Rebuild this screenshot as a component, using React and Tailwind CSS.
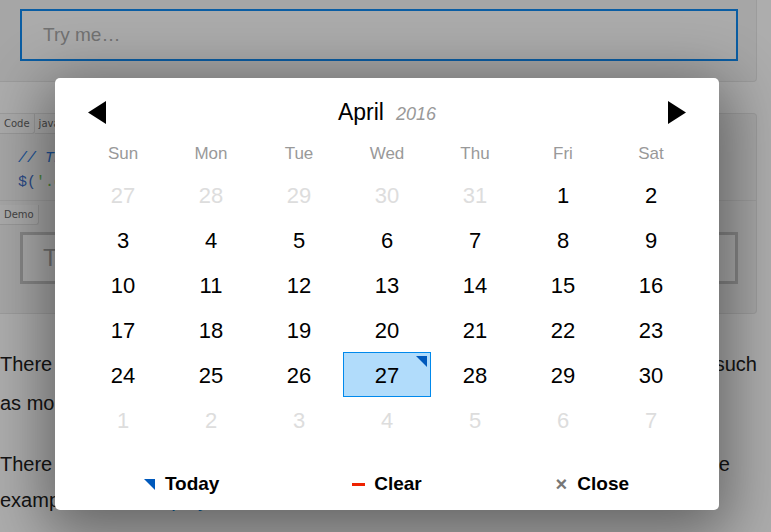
import React from 'react';

const weekdays = ['Sun', 'Mon', 'Tue', 'Wed', 'Thu', 'Fri', 'Sat'];

// April 2016, with the spill-over days from March and May
const buildDays = () => {
    const days = [];
    [27, 28, 29, 30, 31].forEach(d => days.push({ d, out: true }));
    for (let d = 1; d <= 30; d++) days.push({ d, out: false });
    for (let d = 1; days.length < 42; d++) days.push({ d, out: true });
    return days;
};

const Arrow = ({ dir }) => (
    <svg width="18" height="23" viewBox="0 0 18 23">
        {dir === 'left'
            ? <polygon points="18,0 18,23 0,11.5" fill="#000" />
            : <polygon points="0,0 0,23 18,11.5" fill="#000" />}
    </svg>
);

const DayCell = ({ day }) => {
    const selected = !day.out && day.d === 27;
    return (
        <div
            className={`relative h-[45px] flex items-center justify-center pt-[2px] text-[22px] border ${
                selected ? 'bg-[#b1dcfb] border-[#0089ec]' : 'border-transparent'
            } ${day.out ? 'text-[#dddddd]' : 'text-black'}`}
        >
            {day.d}
            {selected && (
                <span className="absolute top-[3px] right-[3px] w-0 h-0 border-t-[11px] border-t-[#0059bc] border-l-[11px] border-l-transparent" />
            )}
        </div>
    );
};

const Picker = () => {
    const days = buildDays();
    return (
        <div className="absolute left-[55px] top-[78px] w-[664px] h-[432px] bg-white rounded-[5px] shadow-[0_14px_60px_10px_rgba(0,0,0,0.42)] px-[24px] pt-[10px] pb-[6px]">
            <div className="h-[48px] flex items-center justify-between px-[9px]">
                <Arrow dir="left" />
                <div className="flex items-baseline gap-[12px]">
                    <span className="text-[23px] text-black">April</span>
                    <span className="text-[18px] italic text-[#999999]">2016</span>
                </div>
                <Arrow dir="right" />
            </div>
            <div className="grid grid-cols-7 h-[36px] items-center">
                {weekdays.map(w => (
                    <div key={w} className="text-center text-[17px] text-[#999999]">{w}</div>
                ))}
            </div>
            <div className="grid grid-cols-7">
                {days.map((day, i) => <DayCell key={i} day={day} />)}
            </div>
            <div className="grid grid-cols-3 mt-[22px] h-[40px] items-center text-[19px] font-bold text-black">
                <div className="flex items-center justify-center gap-[10px]">
                    <span className="w-0 h-0 border-t-[11px] border-t-[#0059bc] border-l-[11px] border-l-transparent" />
                    Today
                </div>
                <div className="flex items-center justify-center gap-[9px]">
                    <span className="w-[13px] h-[3px] bg-[#ee2200]" />
                    Clear
                </div>
                <div className="flex items-center justify-center gap-[10px]">
                    <span className="text-[#777777] text-[20px] leading-none">×</span>
                    Close
                </div>
            </div>
        </div>
    );
};

const Tab = ({ children }) => (
    <span className="inline-block px-[4px] h-[20px] leading-[20px] text-[10px] text-[#666] bg-[#fbfbfb] border-r border-b border-[#e0e0e0] rounded-br-[3px] font-['DejaVu_Sans',sans-serif]">
        {children}
    </span>
);

const Page = () => (
    <div className="w-[757px]">
        <div className="h-[82px] bg-[#f5f5f5] border-r border-b border-[#e6e6e6] rounded-br-[4px] pt-[9px] pl-[20px]">
            <div className="w-[718px] h-[52px] bg-[#fdfdfd] border-2 border-[#108af0] flex items-center pl-[21px] text-[19px] text-[#a8a8a8]">
                Try me…
            </div>
        </div>
        <div className="mt-[31px] h-[201px] bg-[#f5f5f5] border-r border-t border-b border-[#e6e6e6] rounded-r-[4px]">
            <div className="flex">
                <Tab>Code</Tab>
                <Tab>javascript</Tab>
            </div>
            <div className="pl-[18px] pt-[13px] font-['Liberation_Mono',monospace] text-[15px] leading-[24px]">
                <div className="italic text-[#2b7ae0]">// The basic date picker</div>
                <div>
                    <span className="text-[#3e6fc8]">$(</span>
                    <span className="text-[#6fc258]">'.datepicker'</span>
                    <span className="text-[#3e6fc8]">).pickadate()</span>
                </div>
            </div>
            <div className="mt-[5px] border-t border-[#e6e6e6]">
                <Tab>Demo</Tab>
                <div className="ml-[20px] mt-[7px] w-[718px] h-[52px] bg-[#fdfdfd] border-[3px] border-[#c8c8c8] flex items-center pl-[20px] text-[24px] text-[#a8a8a8]">
                    Try me…
                </div>
            </div>
        </div>
        <div className="mt-[31px] text-[20px] text-[#202020] leading-[39px]">
            <div className="flex justify-between">
                <span>There are lots of other ways to change the picker,</span>
                <span>such</span>
            </div>
            <div>as more complex date formats and translations.</div>
            <div className="mt-[22px] flex justify-between pr-[27px]">
                <span>There are also plenty of options available. See the</span>
                <span>more</span>
            </div>
            <div className="-mt-[3px]">
                examples in the <span className="text-[#0089ec]">display formats</span> section for more.
            </div>
        </div>
    </div>
);

export default function App() {
    return (
        <div className="relative w-[771px] h-[532px] overflow-hidden bg-white font-['Liberation_Sans',Arial,sans-serif]">
            <Page />
            <div className="absolute inset-0 bg-black/[0.32]" />
            <Picker />
        </div>
    );
}
